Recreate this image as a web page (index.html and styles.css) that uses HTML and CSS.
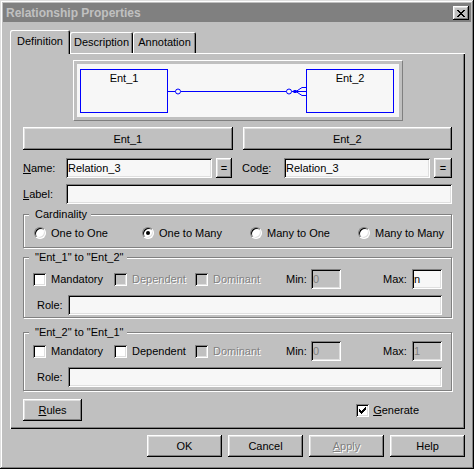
FILE: index.html
```html
<!DOCTYPE html>
<html lang="en">
<head>
  <meta charset="UTF-8">
  <title>Relationship Properties</title>
  <link rel="stylesheet" href="styles.css">
</head>
<body>
  <div class="window">
    <div class="titlebar">
      <span class="title">Relationship Properties</span>
      <button class="btn close" type="button">
        <svg width="8" height="7" viewBox="0 0 8 7" shape-rendering="crispEdges"><path d="M0 0h2v1h-2zM6 0h2v1h-2zM1 1h2v1h-2zM5 1h2v1h-2zM2 2h4v1h-4zM3 3h2v1h-2zM2 4h4v1h-4zM1 5h2v1h-2zM5 5h2v1h-2zM0 6h2v1h-2zM6 6h2v1h-2z"/></svg>
      </button>
    </div>

    <div class="tabs">
      <div class="tab active">Definition</div>
      <div class="tab">Description</div>
      <div class="tab">Annotation</div>
    </div>

    <div class="panel">
      <div class="diagram">
        <svg width="322" height="53" viewBox="0 0 322 53">
          <g fill="none" stroke="#0000ff" stroke-width="1">
            <rect x="3.5" y="5.5" width="87" height="43"/>
            <rect x="229.5" y="5.5" width="87" height="43"/>
            <line x1="91" y1="27.5" x2="98.5" y2="27.5"/>
            <line x1="103.5" y1="27.5" x2="209.5" y2="27.5"/>
            <line x1="214.5" y1="27.5" x2="229" y2="27.5"/>
            <circle cx="101" cy="27.5" r="2.5" fill="#f7f7f7"/>
            <circle cx="212" cy="27.5" r="2.5" fill="#f7f7f7"/>
            <polyline points="229,23.5 225,23.5 219,27.5 225,31.5 229,31.5"/>
          </g>
          <rect x="216.5" y="26" width="3" height="3" fill="#0000ff"/>
          <text x="47" y="18" text-anchor="middle" class="ent-name">Ent_1</text>
          <text x="273" y="18" text-anchor="middle" class="ent-name">Ent_2</text>
        </svg>
      </div>

      <div class="ent-row">
        <button class="btn" type="button">Ent_1</button>
        <button class="btn" type="button">Ent_2</button>
      </div>

      <div class="name-row">
        <label class="lbl"><u>N</u>ame:</label>
        <input class="field field-name" type="text" value="Relation_3">
        <button class="btn eq" type="button">=</button>
        <label class="lbl lbl-code">Cod<u>e</u>:</label>
        <input class="field field-name" type="text" value="Relation_3">
        <button class="btn eq eq-wide" type="button">=</button>
      </div>

      <div class="label-row">
        <label class="lbl"><u>L</u>abel:</label>
        <input class="field grow" type="text">
      </div>

      <fieldset class="group card">
        <legend>Cardinality</legend>
        <div class="radios">
          <span class="opt"><span class="radio"></span>One to One</span>
          <span class="opt"><span class="radio on"></span>One to Many</span>
          <span class="opt"><span class="radio"></span>Many to One</span>
          <span class="opt"><span class="radio"></span>Many to Many</span>
        </div>
      </fieldset>

      <fieldset class="group g-first">
        <legend>"Ent_1" to "Ent_2"</legend>
        <div class="chk-row">
          <span class="opt chk"><span class="check"></span>Mandatory</span>
          <span class="opt chk disabled"><span class="check"></span>Dependent</span>
          <span class="opt chk disabled"><span class="check"></span>Dominant</span>
          <span class="lbl-min">Min:</span>
          <input class="field small" type="text" value="0" disabled>
          <span class="lbl-max">Max:</span>
          <input class="field small" type="text" value="n">
        </div>
        <div class="role-row">
          <span class="lbl-role">Role:</span>
          <input class="field grow" type="text">
        </div>
      </fieldset>

      <fieldset class="group g-second">
        <legend>"Ent_2" to "Ent_1"</legend>
        <div class="chk-row">
          <span class="opt chk"><span class="check"></span>Mandatory</span>
          <span class="opt chk"><span class="check"></span>Dependent</span>
          <span class="opt chk disabled"><span class="check"></span>Dominant</span>
          <span class="lbl-min">Min:</span>
          <input class="field small" type="text" value="0" disabled>
          <span class="lbl-max">Max:</span>
          <input class="field small" type="text" value="1" disabled>
        </div>
        <div class="role-row">
          <span class="lbl-role">Role:</span>
          <input class="field grow" type="text">
        </div>
      </fieldset>

      <div class="rules-row">
        <button class="btn rules" type="button"><u>R</u>ules</button>
        <span class="opt generate">
          <span class="check">
            <svg width="7" height="7" viewBox="0 0 7 7" shape-rendering="crispEdges"><path d="M6 0h1v1h-1zM5 1h2v1h-2zM0 2h1v1h-1zM4 2h3v1h-3zM0 3h2v1h-2zM3 3h3v1h-3zM0 4h5v1h-5zM1 5h3v1h-3zM2 6h1v1h-1z"/></svg>
          </span>
          <span><u>G</u>enerate</span>
        </span>
      </div>
    </div>

    <div class="footer">
      <button class="btn foot" type="button">OK</button>
      <button class="btn foot" type="button">Cancel</button>
      <button class="btn foot disabled" type="button"><u>A</u>pply</button>
      <button class="btn foot" type="button">Help</button>
    </div>
  </div>
</body>
</html>
```

FILE: styles.css
```css
body {
  margin: 0;
  background: #c0c0c0;
  font-family: "Liberation Sans", Arial, sans-serif;
  font-size: 11px;
  color: #000;
}
.window {
  width: 474px;
  height: 469px;
  box-sizing: border-box;
  padding: 3px;
  background: #c0c0c0;
  box-shadow: inset -1px -1px #000, inset 1px 1px #dfdfdf, inset -2px -2px #808080, inset 2px 2px #fff;
  display: flex;
  flex-direction: column;
}
.titlebar {
  height: 19px;
  background: #808080;
  color: #c0c0c0;
  display: flex;
  align-items: center;
  justify-content: space-between;
  padding: 0 2px 0 3px;
  font-size: 12px;
  font-weight: bold;
}
.btn {
  font-family: inherit;
  font-size: 11px;
  color: #000;
  background: #c0c0c0;
  border: 0;
  padding: 0;
  box-shadow: inset -1px -1px #000, inset 1px 1px #fff, inset -2px -2px #808080, inset 2px 2px #dfdfdf;
}
.close {
  width: 16px;
  height: 14px;
  display: flex;
  align-items: center;
  justify-content: center;
  margin-top: 1px;
}

/* tabs */
.tabs {
  display: flex;
  align-items: flex-end;
  height: 23px;
  margin-top: 8px;
  padding-left: 7px;
}
.tab {
  height: 21px;
  box-sizing: border-box;
  display: flex;
  align-items: center;
  justify-content: center;
  padding-bottom: 1px;
  border-radius: 2px 2px 0 0;
  box-shadow: inset 1px 1px #fff, inset -1px 0 #000, inset -2px 0 #808080;
}
.tab:nth-child(1) { width: 60px; }
.tab:nth-child(2) { width: 63px; }
.tab:nth-child(3) { width: 63px; }
.tab.active {
  height: 24px;
  margin-bottom: -1px;
  position: relative;
  z-index: 1;
  background: #c0c0c0;
  padding-bottom: 3px;
}

/* page */
.panel {
  margin: 0 6px 0 7px;
  padding: 7px 13px 8px;
  box-shadow: inset 1px 1px #fff, inset -1px -1px #000, inset -2px -2px #808080;
  display: flex;
  flex-direction: column;
}
.diagram {
  width: 330px;
  height: 61px;
  box-sizing: border-box;
  margin: 0 auto;
  border: 1px solid;
  border-color: #fff #808080 #808080 #fff;
  padding: 3px;
}
.diagram svg {
  display: block;
  background: #f7f7f7;
}
.ent-name {
  font-family: "Liberation Sans", Arial, sans-serif;
  font-size: 11px;
  fill: #000;
}
.ent-row {
  display: grid;
  grid-template-columns: 1fr 1fr;
  gap: 10px;
  height: 23px;
  margin-top: 6px;
}
.name-row, .label-row {
  display: flex;
  height: 20px;
  margin-top: 8px;
}
.label-row {
  margin-top: 6px;
}
.lbl {
  width: 43px;
  display: flex;
  align-items: center;
}
.lbl-code {
  width: 42px;
  margin-left: 10px;
}
.field {
  box-sizing: border-box;
  height: 20px;
  border: 0;
  outline: none;
  padding: 0 2px;
  margin: 0;
  font-family: inherit;
  font-size: 11px;
  color: #000;
  background: #f7f7f7;
  box-shadow: inset 1px 1px #808080, inset -1px -1px #fff, inset 2px 2px #000, inset -2px -2px #dfdfdf;
}
.field:disabled {
  background: #c0c0c0;
  color: #808080;
  -webkit-text-fill-color: #808080;
}
.field-name {
  width: 146px;
}
.grow {
  flex: 1;
  min-width: 0;
}
.eq {
  width: 16px;
  margin-left: 4px;
}
.eq-wide {
  width: 18px;
}

/* group boxes */
.group {
  margin: 4px 0 0;
  min-width: 0;
  border: 1px solid #808080;
  box-shadow: inset 1px 1px #fff, 1px 1px #fff;
  padding: 4px 9px 6px;
}
.group legend {
  line-height: 13px;
  margin-left: -4px;
  padding: 0 4px 0 6px;
  background: #c0c0c0;
}
.g-first {
  margin-top: 3px;
  padding-top: 5px;
  padding-bottom: 2px;
}
.g-second {
  margin-top: 8px;
  padding-top: 2px;
  padding-bottom: 3px;
}
.radios {
  display: grid;
  grid-template-columns: 108px 108px 108px auto;
  height: 16px;
  align-items: center;
  padding-left: 1px;
}
.opt {
  display: flex;
  align-items: center;
  gap: 5px;
  white-space: nowrap;
}
.radio {
  width: 12px;
  height: 12px;
  box-sizing: border-box;
  border-radius: 50%;
  border: 1px solid;
  border-color: #808080 #fff #fff #808080;
  box-shadow: inset 1px 1px #000, inset -1px -1px #dfdfdf;
  background: #fff;
  display: flex;
  align-items: center;
  justify-content: center;
}
.radio.on::after {
  content: "";
  width: 4px;
  height: 4px;
  border-radius: 50%;
  background: #000;
}
.check {
  width: 13px;
  height: 13px;
  box-sizing: border-box;
  background: #fff;
  box-shadow: inset 1px 1px #808080, inset -1px -1px #fff, inset 2px 2px #000, inset -2px -2px #dfdfdf;
  display: flex;
  align-items: center;
  justify-content: center;
}
.disabled {
  color: #808080;
  text-shadow: 1px 1px #fff;
}
.disabled .check {
  background: #c0c0c0;
}
.chk-row {
  display: flex;
  align-items: center;
  height: 20px;
}
.chk {
  width: 81px;
}
.lbl-min {
  width: 25px;
  margin-left: 10px;
}
.small {
  width: 30px;
}
.lbl-max {
  width: 29px;
  margin-left: auto;
}
.role-row {
  display: flex;
  align-items: center;
  height: 20px;
  margin-top: 6px;
  padding-left: 4px;
}
.lbl-role {
  width: 31px;
}

/* bottom of page */
.rules-row {
  display: flex;
  align-items: center;
  justify-content: space-between;
  margin-top: 8px;
  height: 22px;
}
.rules {
  width: 59px;
  height: 22px;
}
.generate {
  gap: 4px;
  margin-right: 33px;
}
.footer {
  display: flex;
  justify-content: flex-end;
  gap: 6px;
  margin-top: 6px;
  padding-right: 6px;
}
.foot {
  width: 75px;
  height: 22px;
}
```
